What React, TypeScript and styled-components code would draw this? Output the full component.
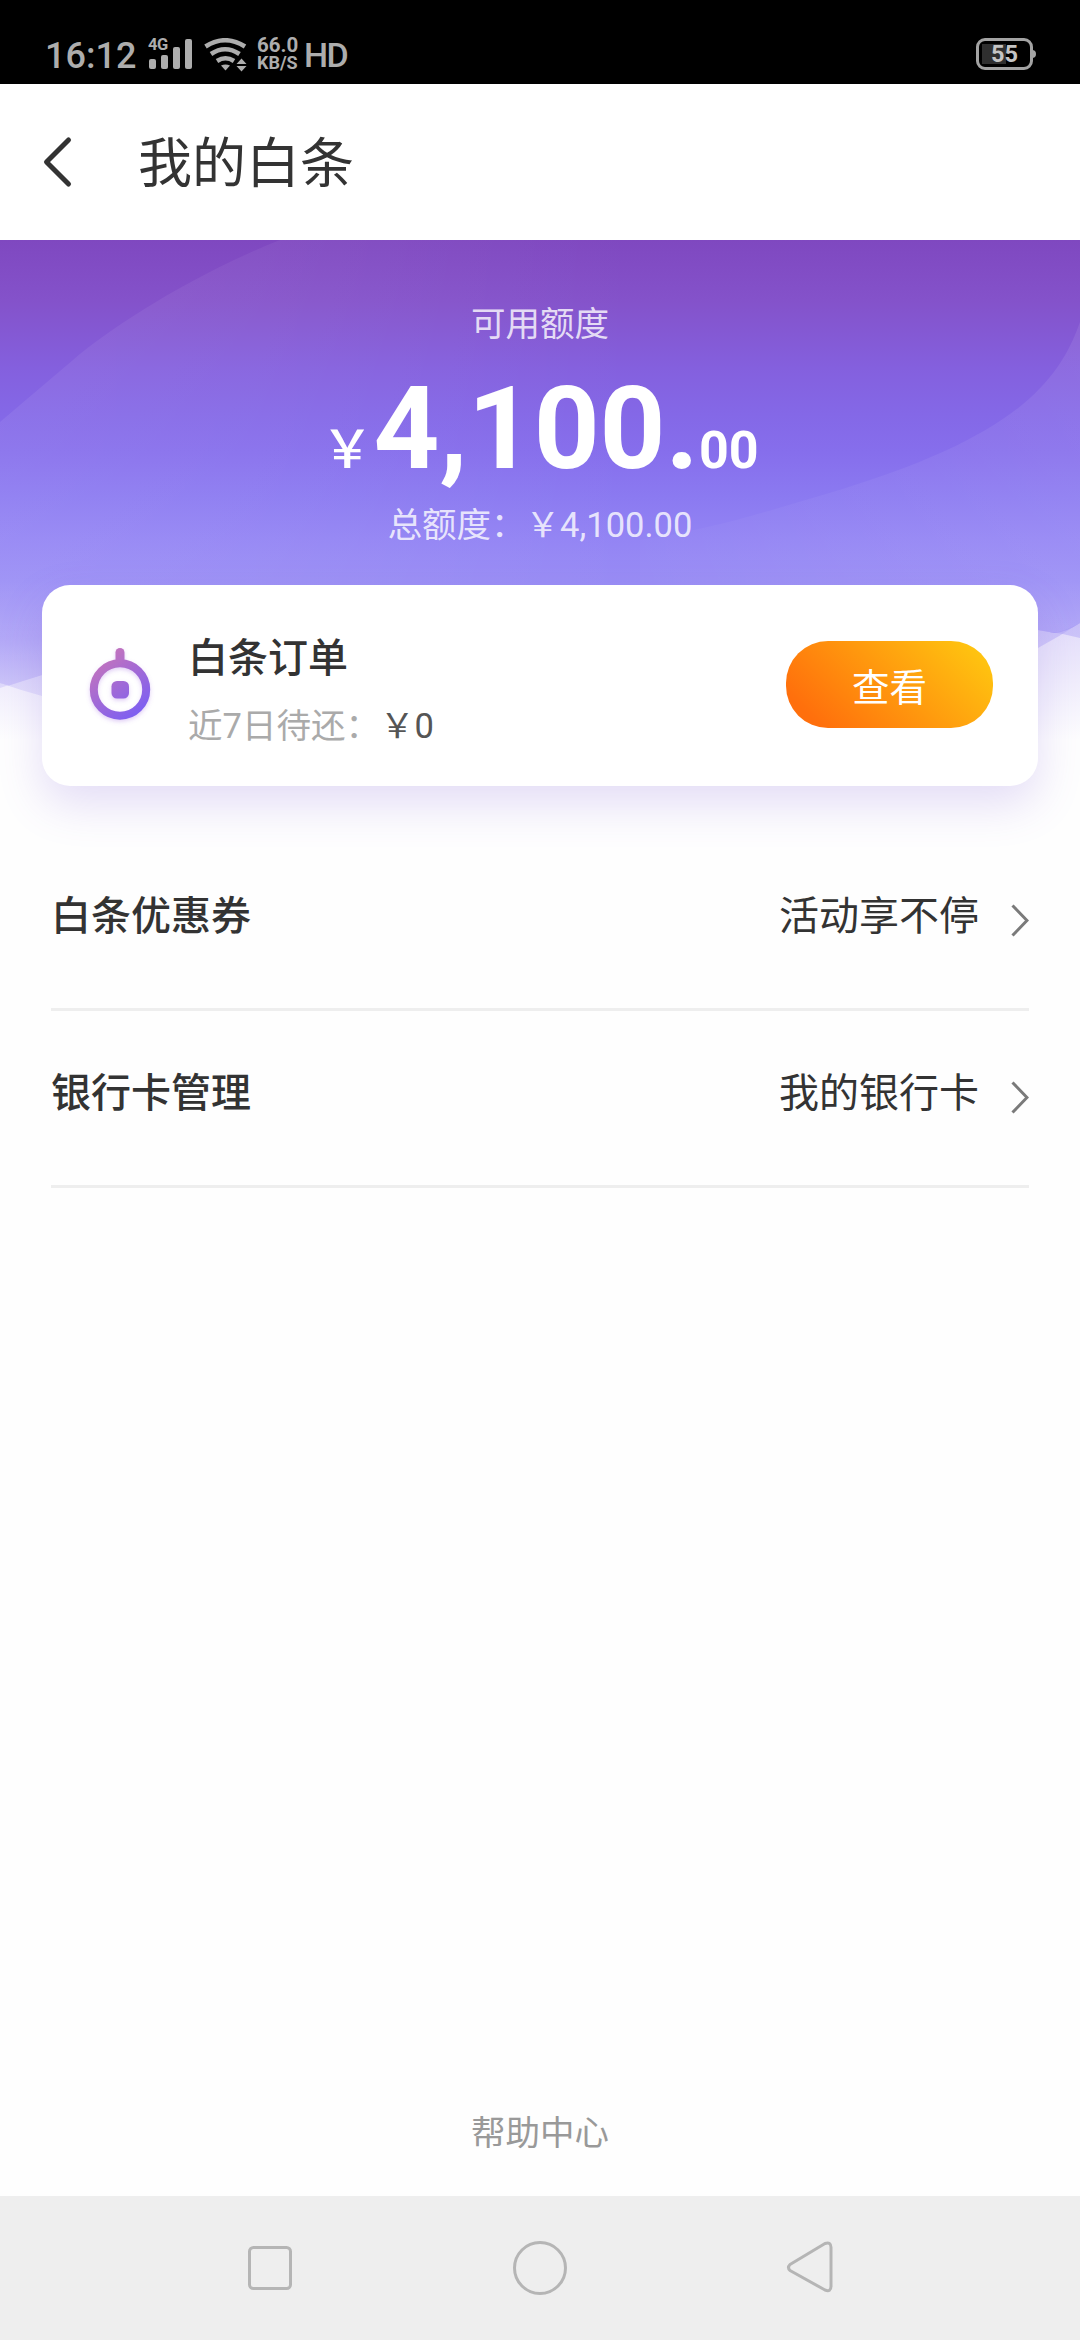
import React from "react";
import styled, { createGlobalStyle } from "styled-components";

const GlobalStyle = createGlobalStyle`
  * { box-sizing: border-box; }
  body {
    margin: 0;
    background: #fefefe;
    font-family: Roboto, "Noto Sans CJK SC", sans-serif;
    color: #333;
  }
`;

const Screen = styled.div`
  width: 1080px;
  height: 2340px;
  display: flex;
  flex-direction: column;
  overflow: hidden;
  background: #fefefe;
`;

/* ---------- status bar ---------- */

const StatusBar = styled.div`
  height: 84px;
  flex: none;
  display: flex;
  justify-content: space-between;
  padding: 30px 47px 0 45px;
  background: #000;
  color: #adadad;
`;

const StatusGroup = styled.div`
  display: flex;
  align-items: flex-start;
`;

const Clock = styled.span`
  width: 98px;
  padding-top: 3px;
  font-size: 36px;
  font-weight: 500;
  line-height: 46px;
`;

const Speed = styled.div`
  display: flex;
  flex-direction: column;
  width: 47px;
  padding-top: 7px;
  margin-left: 10px;
  font-size: 20.5px;
  font-weight: 700;
  line-height: 17px;
`;

const SpeedUnit = styled.span`
  font-size: 18px;
  line-height: 18px;
`;

const Network = styled.span`
  padding-top: 2px;
  font-size: 34px;
  font-weight: 500;
  line-height: 46px;
  letter-spacing: -1.5px;
`;

const Battery = styled.div`
  position: relative;
  display: flex;
  align-items: center;
  justify-content: center;
  width: 57px;
  height: 32px;
  margin-top: 8px;
  border: 3px solid #a3a3a3;
  border-radius: 9px;
  font-size: 23.5px;
  font-weight: 700;
  color: #c4c4c4;
  background: linear-gradient(#2f2f2f, #2f2f2f) 3px 3px / 24px 20px no-repeat;

  &::after {
    content: "";
    position: absolute;
    right: -6px;
    top: 9px;
    width: 4px;
    height: 8px;
    border-radius: 0 4px 4px 0;
    background: #a3a3a3;
  }
`;

/* ---------- title bar ---------- */

const TitleBar = styled.header`
  height: 156px;
  flex: none;
  display: flex;
  align-items: center;
  padding-left: 40px;
  background: #fff;
`;

const Title = styled.h1`
  margin: 6px 0 0 62px;
  font-size: 54px;
  font-weight: 400;
  line-height: 78px;
`;

/* ---------- credit panel ---------- */

const Hero = styled.section`
  position: relative;
  height: 594px;
  flex: none;
  display: flex;
  flex-direction: column;
  align-items: center;
  padding-top: 59px;
`;

const Backdrop = styled.svg`
  position: absolute;
  inset: 0;
`;

const Caption = styled.div`
  position: relative;
  font-size: 34.5px;
  line-height: 50px;
  color: rgba(255, 255, 255, 0.8);
`;

const Amount = styled.div`
  position: relative;
  display: flex;
  align-items: baseline;
  height: 151px;
  padding-top: 4px;
  line-height: 151px;
  color: #fff;
  font-size: 115px;
  font-weight: 700;
`;

const Small = styled.span<{ $weight: number }>`
  font-size: 52px;
  font-weight: ${(p) => p.$weight};
`;

const Card = styled.div`
  position: relative;
  display: flex;
  align-items: center;
  width: 996px;
  height: 201px;
  margin-top: 35px;
  padding: 0 45px 3px 43px;
  border-radius: 28px;
  background: #fff;
  box-shadow: 0 18px 45px rgba(118, 84, 214, 0.2);
`;

const CardText = styled.div`
  flex: 1;
  margin-left: 33px;
  padding-top: 12px;
`;

const CardTitle = styled.div`
  font-size: 40px;
  font-weight: 500;
  line-height: 58px;
`;

const CardNote = styled.div`
  margin-top: 13px;
  font-size: 34.5px;
  line-height: 50px;
  color: #aaa;
`;

const Due = styled.span`
  color: #555;
`;

const ViewButton = styled.button`
  width: 207px;
  height: 87px;
  padding: 0;
  border: 0;
  border-radius: 42px;
  background: linear-gradient(45deg, #ff6f0c 12%, #ffc410 92%);
  color: #fff;
  font-family: inherit;
  font-size: 37.5px;
`;

/* ---------- entries ---------- */

const List = styled.ul`
  flex: 1;
  margin: 0;
  padding: 0 51px;
  list-style: none;
`;

const Row = styled.li`
  height: 177px;
  display: flex;
  align-items: center;
  border-bottom: 3px solid #eee;
  font-size: 40px;
  line-height: 58px;
`;

const RowLabel = styled.span`
  flex: 1;
  padding-bottom: 9px;
  font-weight: 500;
`;

const RowValue = styled.span`
  padding-bottom: 9px;
  margin-right: 32px;
`;

const Help = styled.a`
  align-self: center;
  margin-bottom: 38px;
  font-size: 34.5px;
  line-height: 50px;
  color: #999;
`;

/* ---------- system navigation ---------- */

const NavBar = styled.nav`
  height: 144px;
  flex: none;
  display: flex;
  justify-content: space-between;
  align-items: center;
  padding: 0 240px;
  background: #eee;
`;

const NavIcon = styled.svg`
  width: 60px;
  height: 60px;
  fill: none;
  stroke: #b5b5b5;
  stroke-width: 3;
  stroke-linejoin: round;
`;

const Signal = styled.div`
  position: relative;
  width: 50px;
  height: 42px;
`;

const SignalTag = styled.span`
  position: absolute;
  left: 5px;
  top: 6px;
  font-size: 16.5px;
  font-weight: 700;
  line-height: 18px;
  letter-spacing: -0.5px;
`;

const SignalIcon = () => (
  <Signal>
    <svg width="50" height="42" viewBox="143 30 50 42" fill="#adadad">
      <rect x="149" y="59" width="7" height="10" rx="2" />
      <rect x="161" y="55" width="7" height="14" rx="2" />
      <rect x="173" y="47" width="7" height="22" rx="2" />
      <rect x="185" y="39" width="7" height="30" rx="2" />
    </svg>
    <SignalTag>4G</SignalTag>
  </Signal>
);

const WifiArt = styled.svg`
  margin: 8px 0 0 10px;
`;

const WifiIcon = () => (
  <WifiArt width="44" height="34" viewBox="203 38 44 34">
    <g fill="none" stroke="#adadad" strokeWidth="4.600">
      <path d="M205.500 46.500 Q225 34 245 46.500" />
      <path d="M211 54 Q225 44.500 239.500 54" />
      <path d="M217 61 Q225.500 55.500 234 61" />
    </g>
    <path d="M221 65.500 Q225.500 63.500 230 65.500 L225.500 70.500Z" fill="#adadad" />
    <path d="M236.500 64 h10 l-5-5.500z M236.500 66 h10 l-5 5.500z" fill="#adadad" />
  </WifiArt>
);

const BackIcon = () => (
  <svg width="36" height="54" viewBox="40 135 36 54" fill="none" stroke="#333" strokeWidth="5" strokeLinecap="round" strokeLinejoin="round">
    <path d="M68.500 140 L46.500 162 L68.500 184" />
  </svg>
);

const PendantIcon = () => (
  <svg width="70" height="90" viewBox="85 639 70 90">
    <defs>
      <linearGradient id="pendant" gradientUnits="userSpaceOnUse" x1="100" y1="662" x2="138" y2="712">
        <stop offset="0" stopColor="#c072bf" />
        <stop offset="1" stopColor="#7f60f0" />
      </linearGradient>
      <filter id="glow" x="-20%" y="-20%" width="140%" height="140%">
        <feDropShadow dx="0" dy="2" stdDeviation="2" floodColor="#9a60e0" floodOpacity="0.3" />
      </filter>
    </defs>
    <g filter="url(#glow)">
      <circle cx="120" cy="689.500" r="26.200" fill="none" stroke="url(#pendant)" strokeWidth="8" />
      <rect x="115.500" y="648" width="9" height="18" rx="4.500" fill="url(#pendant)" />
      <rect x="111.500" y="681" width="17.500" height="17.500" rx="5.500" fill="url(#pendant)" />
    </g>
  </svg>
);

const ChevronIcon = () => (
  <svg width="18" height="34" viewBox="0 0 18 34" fill="none" stroke="#7a7a7a" strokeWidth="3">
    <path d="M1.500 1.500 L16 16.500 L1.500 31.500" />
  </svg>
);

const HeroArt = () => (
  <Backdrop width="1080" height="594" viewBox="0 240 1080 594">
    <defs>
      <linearGradient id="sky" gradientUnits="userSpaceOnUse" x1="0" y1="240" x2="0" y2="700">
        <stop offset="0" stopColor="#7f48c0" />
        <stop offset="0.130" stopColor="#8452ca" />
        <stop offset="0.280" stopColor="#8460de" />
        <stop offset="0.380" stopColor="#8468e7" />
        <stop offset="0.460" stopColor="#866eec" />
        <stop offset="0.560" stopColor="#8b7af1" />
        <stop offset="0.650" stopColor="#9384f4" />
        <stop offset="0.740" stopColor="#998df5" />
        <stop offset="0.870" stopColor="#aea3f6" />
        <stop offset="1" stopColor="#d0c9f9" />
      </linearGradient>
      <linearGradient id="leftMist" gradientUnits="userSpaceOnUse" x1="0" y1="0" x2="640" y2="0">
        <stop offset="0" stopColor="#fff" stopOpacity="0.070" />
        <stop offset="0.400" stopColor="#fff" stopOpacity="0.050" />
        <stop offset="1" stopColor="#fff" stopOpacity="0" />
      </linearGradient>
      <linearGradient id="rightMist" gradientUnits="userSpaceOnUse" x1="640" y1="0" x2="1080" y2="0">
        <stop offset="0" stopColor="#fff" stopOpacity="0.020" />
        <stop offset="1" stopColor="#fff" stopOpacity="0.080" />
      </linearGradient>
      <linearGradient id="haze" gradientUnits="userSpaceOnUse" x1="0" y1="620" x2="0" y2="740">
        <stop offset="0" stopColor="#e2dcfa" />
        <stop offset="1" stopColor="#e2dcfa" stopOpacity="0" />
      </linearGradient>
    </defs>
    <rect x="0" y="620" width="1080" height="120" fill="url(#haze)" />
    <path d="M0 240 H1080 V623 Q1060 636 1038 648 Q540 860 42 696 Q20 690 0 683Z" fill="url(#sky)" fillOpacity="0.450" />
    <path d="M0 240 H1080 V638 Q1060 633 1038 630 Q540 560 42 675 Q20 681 0 688Z" fill="url(#sky)" fillOpacity="0.450" />
    <path d="M0 240 H1080 V623 Q1060 636 1049 632 L1038 630 Q540 560 42 675 L9 685.500 L0 683Z" fill="url(#sky)" />
    <path d="M1080 322 C1058 385 1010 440 826 494 C770 510 723 527 640 540 V600 L1038 630 L1051 632.500 Q1062 633 1080 623Z" fill="url(#rightMist)" />
    <path d="M0 422 L73 360 C110 328 190 276 280 240 H640 V600 L42 675 L9 685.500 L0 683Z" fill="url(#leftMist)" />
  </Backdrop>
);

const entries = [
  { label: "白条优惠券", value: "活动享不停" },
  { label: "银行卡管理", value: "我的银行卡" },
];

export default function App() {
  return (
    <>
      <GlobalStyle />
      <Screen>
        <StatusBar>
          <StatusGroup>
            <Clock>16:12</Clock>
            <SignalIcon />
            <WifiIcon />
            <Speed>
              66.0
              <SpeedUnit>KB/S</SpeedUnit>
            </Speed>
            <Network>HD</Network>
          </StatusGroup>
          <Battery>55</Battery>
        </StatusBar>
        <TitleBar>
          <BackIcon />
          <Title>我的白条</Title>
        </TitleBar>
        <Hero>
          <HeroArt />
          <Caption>可用额度</Caption>
          <Amount>
            <Small $weight={500}>￥</Small>
            4,100.
            <Small $weight={700}>00</Small>
          </Amount>
          <Caption>总额度：￥4,100.00</Caption>
          <Card>
            <PendantIcon />
            <CardText>
              <CardTitle>白条订单</CardTitle>
              <CardNote>
                近7日待还：<Due>￥0</Due>
              </CardNote>
            </CardText>
            <ViewButton>查看</ViewButton>
          </Card>
        </Hero>
        <List>
          {entries.map((entry) => (
            <Row key={entry.label}>
              <RowLabel>{entry.label}</RowLabel>
              <RowValue>{entry.value}</RowValue>
              <ChevronIcon />
            </Row>
          ))}
        </List>
        <Help>帮助中心</Help>
        <NavBar>
          <NavIcon viewBox="0 0 60 60">
            <rect x="9.500" y="9.500" width="41" height="41" rx="4" />
          </NavIcon>
          <NavIcon viewBox="0 0 60 60">
            <circle cx="30" cy="30" r="25.500" />
          </NavIcon>
          <NavIcon viewBox="0 0 60 60">
            <path d="M10 26.500 L45 5.500 Q51 3.500 51 9.500 V48 Q51 54.500 45 52 L10 32.500 Q7 29.500 10 26.500Z" />
          </NavIcon>
        </NavBar>
      </Screen>
    </>
  );
}
